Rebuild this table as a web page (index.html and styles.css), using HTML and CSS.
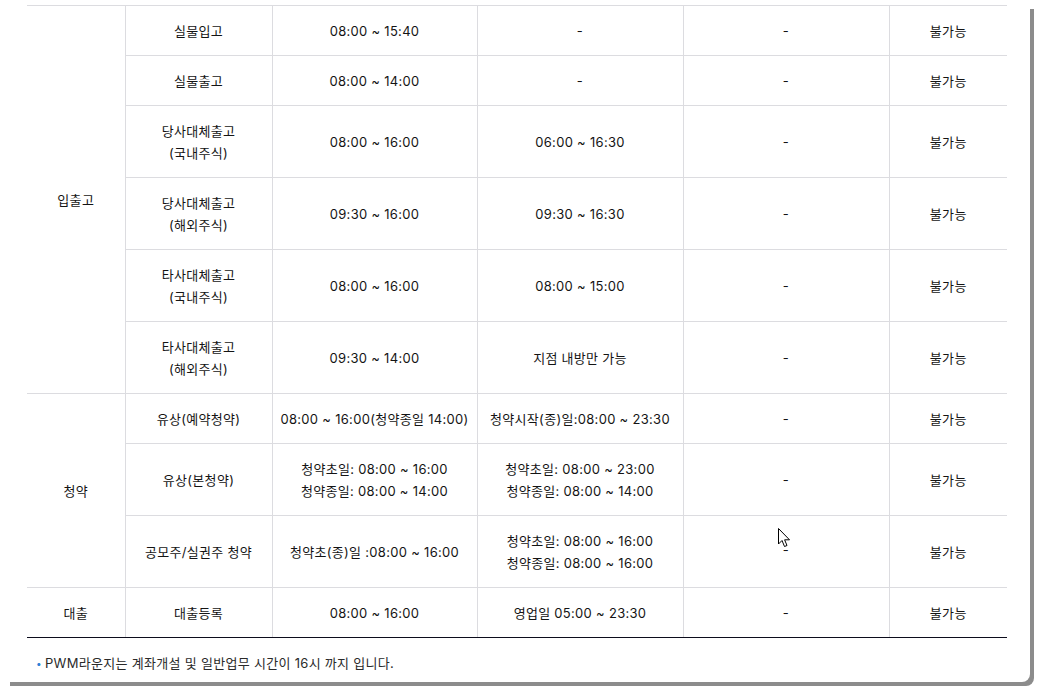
FILE: index.html
```html
<!DOCTYPE html>
<html lang="ko">
<head>
<meta charset="utf-8">
<link rel="stylesheet" href="styles.css">
</head>
<body>
<div class="panel">
  <table class="hours">
    <colgroup>
      <col class="c1"><col class="c2"><col class="c3"><col class="c4"><col class="c5"><col class="c6">
    </colgroup>
    <tbody>
      <tr class="r50">
        <td rowspan="6" class="group">입출고</td>
        <td>실물입고</td><td>08:00 ~ 15:40</td><td>-</td><td>-</td><td>불가능</td>
      </tr>
      <tr class="r50">
        <td>실물출고</td><td>08:00 ~ 14:00</td><td>-</td><td>-</td><td>불가능</td>
      </tr>
      <tr class="r72">
        <td>당사대체출고<br>(국내주식)</td><td>08:00 ~ 16:00</td><td>06:00 ~ 16:30</td><td>-</td><td>불가능</td>
      </tr>
      <tr class="r72">
        <td>당사대체출고<br>(해외주식)</td><td>09:30 ~ 16:00</td><td>09:30 ~ 16:30</td><td>-</td><td>불가능</td>
      </tr>
      <tr class="r72">
        <td>타사대체출고<br>(국내주식)</td><td>08:00 ~ 16:00</td><td>08:00 ~ 15:00</td><td>-</td><td>불가능</td>
      </tr>
      <tr class="r72">
        <td>타사대체출고<br>(해외주식)</td><td>09:30 ~ 14:00</td><td>지점 내방만 가능</td><td>-</td><td>불가능</td>
      </tr>
      <tr class="r50">
        <td rowspan="3" class="group">청약</td>
        <td>유상(예약청약)</td><td>08:00 ~ 16:00(청약종일 14:00)</td><td>청약시작(종)일:08:00 ~ 23:30</td><td>-</td><td>불가능</td>
      </tr>
      <tr class="r72">
        <td>유상(본청약)</td><td>청약초일: 08:00 ~ 16:00<br>청약종일: 08:00 ~ 14:00</td><td>청약초일: 08:00 ~ 23:00<br>청약종일: 08:00 ~ 14:00</td><td>-</td><td>불가능</td>
      </tr>
      <tr class="r72">
        <td>공모주/실권주 청약</td><td>청약초(종)일 :08:00 ~ 16:00</td><td>청약초일: 08:00 ~ 16:00<br>청약종일: 08:00 ~ 16:00</td><td class="cursor-cell"><span class="dash-low">-</span><svg class="cursor" width="14" height="22" viewBox="0 0 14 22"><path d="M0.5 0.5 L0.5 16 L4 12.5 L6.5 18.5 L9 17.5 L6.6 11.8 L11.5 11.8 Z" fill="#fff" stroke="#000" stroke-width="1"/></svg></td><td>불가능</td>
      </tr>
      <tr class="r50 last">
        <td class="group">대출</td>
        <td>대출등록</td><td>08:00 ~ 16:00</td><td>영업일 05:00 ~ 23:30</td><td>-</td><td>불가능</td>
      </tr>
    </tbody>
  </table>
  <p class="note"><span class="bullet">•</span>PWM라운지는 계좌개설 및 일반업무 시간이 16시 까지 입니다.</p>
</div>
</body>
</html>
```
FILE: styles.css
```css
html, body {
  margin: 0;
  padding: 0;
  background: #fff;
}
body {
  font-family: "Inter", "Noto Sans CJK KR", sans-serif;
  color: #141414;
  min-height: 689px;
  padding-top: 5px;
  box-sizing: border-box;
}
.panel {
  margin: 0 0 0 6px;
  width: 1003px;
  height: 677px;
  padding: 0 0 0 21px;
  background: #fff;
  box-shadow: 4px 4px 0 0 #8c8c8c;
  border-bottom-right-radius: 8px;
}
.hours {
  width: 980px;
  border-collapse: collapse;
  table-layout: fixed;
  font-size: 13px;
  line-height: 22px;
  letter-spacing: 0.3px;
}
.c1 { width: 98px; }
.c2 { width: 147px; }
.c3 { width: 205px; }
.c4 { width: 206px; }
.c5 { width: 206px; }
.c6 { width: 118px; }
.hours td {
  border: 1px solid #dcdce0;
  text-align: center;
  vertical-align: middle;
  padding: 0;
  white-space: nowrap;
}
.hours td:first-child { border-left: none; }
.hours td:last-child { border-right: none; }
.hours .group { border-left: none; }
.r50 { height: 50px; }
.r72 { height: 72px; }
.hours tr.last td { border-bottom: 1px solid #0c0c1c; }
.cursor-cell { position: relative; }
.dash-low { position: relative; top: -2px; }
.cursor {
  position: absolute;
  left: 94px;
  top: 12px;
}
.note {
  margin: 15px 0 0 9px;
  font-size: 13px;
  line-height: 20px;
  letter-spacing: 0.3px;
  color: #2a2a2a;
}
.bullet {
  display: inline-block;
  width: 9px;
  color: #2f7fd6;
  font-size: 10px;
  vertical-align: 1px;
}
```
